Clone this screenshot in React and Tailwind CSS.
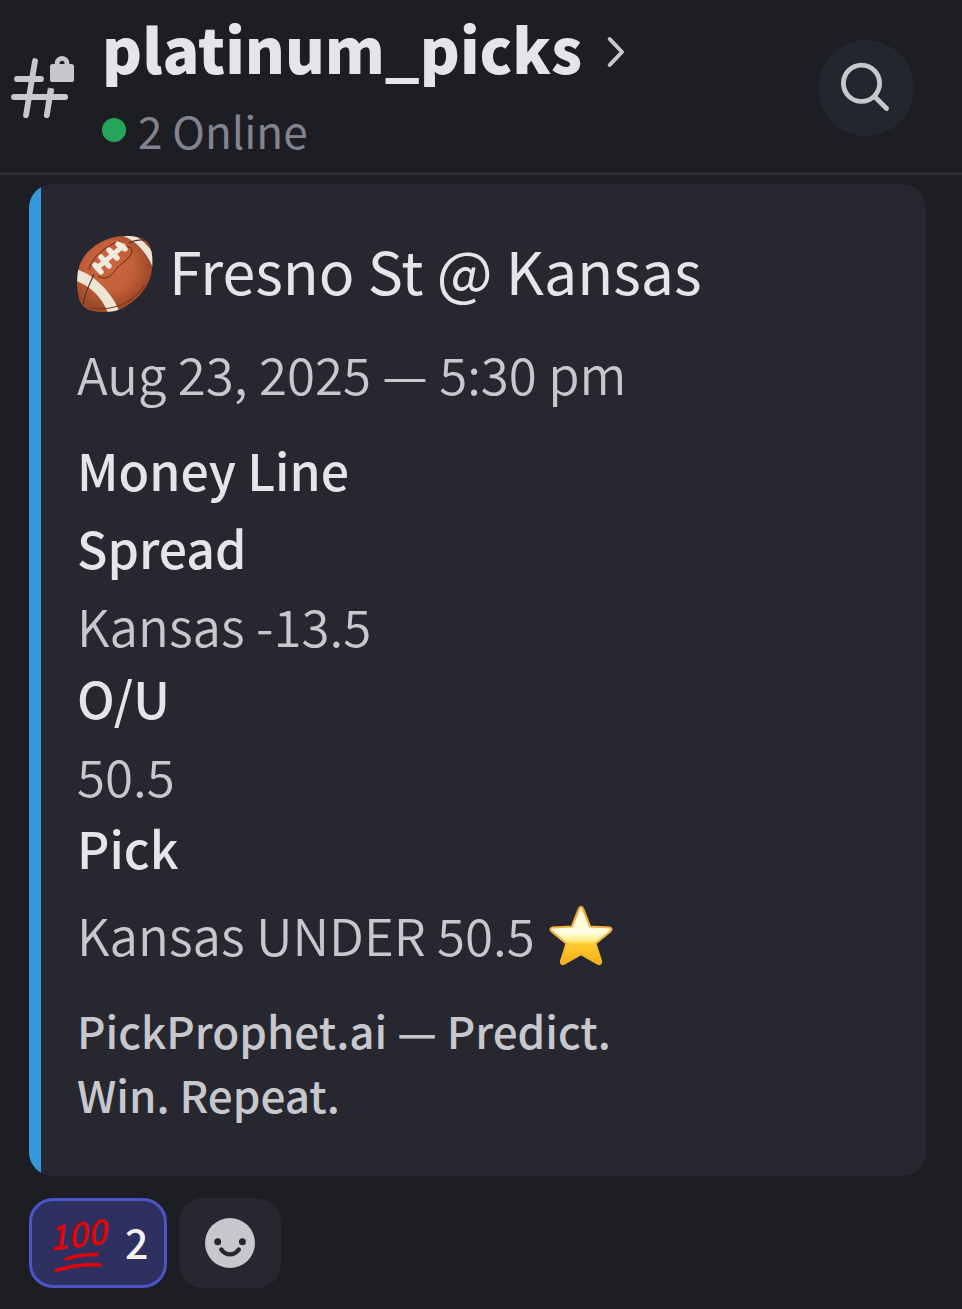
import React, { useState } from "react";

const embed = {
  title: "Fresno St @ Kansas",
  date: "Aug 23, 2025 — 5:30 pm",
  footer: "PickProphet.ai — Predict. Win. Repeat.",
};

const HashLockIcon = () => (
  <svg
    viewBox="8 52 70 70"
    className="w-[70px] h-[70px] shrink-0"
    fill="none"
    stroke="#c7c8ce"
    strokeWidth="5.8"
    strokeLinecap="round"
    aria-hidden="true"
  >
    <path d="M35 61 26 115.200M17 79h24M14 97h51.200M46.800 115.200 50.500 92" />
    <path d="m48.600 88.200 5.200.8-1 6-5-.8Z" fill="#c7c8ce" strokeWidth="0.8" strokeLinejoin="round" />
    <rect x="50" y="64" width="24" height="18" rx="2.600" fill="#c7c8ce" stroke="none" />
    <path d="M57.200 66v-3.500a4.900 4.900 0 0 1 9.700 0V66" strokeWidth="4.800" strokeLinecap="butt" />
  </svg>
);

const ChevronIcon = () => (
  <svg
    viewBox="0 0 20 34"
    className="mt-2 w-5 h-[34px] shrink-0"
    fill="none"
    stroke="#c7c8ce"
    strokeWidth="4"
    strokeLinecap="round"
    strokeLinejoin="round"
    aria-hidden="true"
  >
    <path d="M3.700 4 16 17 3.700 30" />
  </svg>
);

const SearchIcon = () => (
  <svg
    viewBox="818 40 96 96"
    className="w-24 h-24"
    fill="none"
    stroke="#c7c8ce"
    strokeWidth="4.800"
    strokeLinecap="round"
    aria-hidden="true"
  >
    <circle cx="861.500" cy="83.300" r="18.100" />
    <path d="m875 97 11.600 11.500" />
  </svg>
);

const FootballIcon = () => (
  <svg viewBox="0 0 76 76" className="mt-2 w-[76px] h-[76px] shrink-0" role="img" aria-label="Football">
    <defs>
      <radialGradient id="leather" cx="0.42" cy="0.4" r="0.66">
        <stop offset="0" stopColor="#cf6840" />
        <stop offset="0.5" stopColor="#c4603a" />
        <stop offset="0.85" stopColor="#9c4828" />
        <stop offset="1" stopColor="#b5522b" />
      </radialGradient>
      <pattern id="grain" width="4" height="4" patternUnits="userSpaceOnUse">
        <circle cx="1" cy="1" r="0.6" fill="#8f3e20" opacity="0.3" />
        <circle cx="3" cy="3" r="0.6" fill="#8f3e20" opacity="0.3" />
      </pattern>
      <clipPath id="ball">
        <path d="M1 35C4 18 22 1 47 0c11-.5 20 2 24 7 4 5 5 15 4 26-1 17-17 36-37 42-12 2-25 1-31-4C0 65-1 48 1 35Z" />
      </clipPath>
    </defs>
    <g clipPath="url(#ball)">
      <rect width="76" height="76" fill="url(#leather)" />
      <rect width="76" height="76" fill="url(#grain)" />
      <path d="M-1 45C13 50 25 61 31 77h12C37 61 22 41-1 33Z" fill="#ece5d5" />
      <path d="M44-1c12 4 25 15 32 33V17C70 8 63 2 55-2Z" fill="#ece5d5" />
      <path d="M17 38C12 50 7 57 6 70M52 7c8-4 15-4 22-1" fill="none" stroke="#50342c" strokeWidth="1.200" />
      <path d="M12 34C14 22 28 10 43 5M21 40c10 6 15-3 20-9 4-4 13-9 14-16 0-3-2-4-5-4" fill="none" stroke="#5a2c1b" strokeWidth="1" />
      <path d="M8 71c20 5 44 1 60-22" fill="none" stroke="#843719" strokeWidth="1.200" />
    </g>
    <g stroke="#f1ebdf" strokeWidth="5.400" strokeLinecap="round">
      <path d="M20 32 46 10" strokeWidth="5" />
      <path d="m18 29 6 7M24 21l8 9M32 14l8 8M41 8l7 5" />
    </g>
  </svg>
);

const StarIcon = () => (
  <svg viewBox="0 0 64 62" className="mt-1 w-16 h-[62px] shrink-0" role="img" aria-label="Star">
    <defs>
      <linearGradient id="star" x1="0" y1="0" x2="0" y2="1">
        <stop offset="0" stopColor="#fffbd8" />
        <stop offset="0.45" stopColor="#fffce0" />
        <stop offset="0.58" stopColor="#fff08f" />
        <stop offset="0.66" stopColor="#fdcb2d" />
        <stop offset="1" stopColor="#f9b013" />
      </linearGradient>
      <linearGradient id="edge" x1="0" y1="0" x2="0" y2="1">
        <stop offset="0" stopColor="#f0a43c" />
        <stop offset="0.6" stopColor="#f6bc45" />
        <stop offset="1" stopColor="#f3ae27" />
      </linearGradient>
    </defs>
    <path
      d="M30 3.500q2-3.500 4 0L41 21.500 60.500 22.500q3.500 1 .8 3.800L46.500 38.500 52 56q.3 4-3 2.800L32 49 15 58.800q-3.300 1.200-3-2.800L17.500 38.500 2.700 26.300Q0 23.500 3.500 22.500L23 21.500Z"
      fill="url(#star)"
      stroke="url(#edge)"
      strokeWidth="2.200"
      strokeLinejoin="round"
    />
  </svg>
);

const HundredIcon = () => (
  <svg viewBox="0 0 56 60" className="w-14 h-[60px] shrink-0 overflow-visible" role="img" aria-label="100">
    <text
      x="-2"
      y="37"
      transform="rotate(-7 4 38)"
      className="text-[34px] font-medium italic"
      fill="#e30505"
    >
      100
    </text>
    <path
      d="M14 46C24 42.500 34 41.500 45 41.500M4 57.500C18 53 33 51 48 52"
      fill="none"
      stroke="#e30505"
      strokeWidth="3.400"
      strokeLinecap="round"
    />
  </svg>
);

const SmileIcon = () => (
  <svg viewBox="0 0 50 50" className="w-[50px] h-[50px]" aria-hidden="true">
    <circle cx="25" cy="25" r="25" fill="#c7c8ce" />
    <circle cx="12.700" cy="23.800" r="3.500" fill="#27272f" />
    <circle cx="37.400" cy="23.800" r="3.500" fill="#27272f" />
    <path
      d="M16.300 31.500c4.500 6.500 13 6.500 17.500 0"
      fill="none"
      stroke="#27272f"
      strokeWidth="4.400"
      strokeLinecap="round"
    />
  </svg>
);

const ChannelHeader = () => (
  <header className="flex items-start border-b-[3px] border-[#2d2e34] pl-2 pr-12">
    <div className="pt-[52px]">
      <HashLockIcon />
    </div>
    <div className="min-w-0 flex-1 pl-6 pt-2">
      <a href="#channel" className="flex items-center gap-6">
        <h1 className="text-[61px] leading-[80px] font-black text-[#e4e5e9]">platinum_picks</h1>
        <ChevronIcon />
      </a>
      <p className="flex items-center gap-3 text-[44px] leading-[84px] text-[#82838f]">
        <span className="w-6 h-6 rounded-full bg-[#25a55a]" />
        2 Online
      </p>
    </div>
    <button type="button" aria-label="Search" className="mt-10 rounded-full bg-[#24262d]">
      <SearchIcon />
    </button>
  </header>
);

const FieldName = ({ children }) => (
  <dt className="text-[50px] leading-16 font-medium text-[#e4e5e9]">{children}</dt>
);

const FieldValue = ({ children }) => (
  <dd className="mt-[14px] mb-2 flex items-center gap-3 text-[51px] leading-16 font-[350] text-[#c7c8ce]">
    {children}
  </dd>
);

const PickEmbed = () => (
  <article className="rounded-3xl overflow-hidden flex bg-[#27272f]">
    <div className="w-3 shrink-0 bg-[#3498db]" />
    <div className="min-w-0 flex-1 pl-9 pr-12 pt-11 pb-[50px]">
      <h2 className="flex items-center gap-4 text-[59px] leading-[76px] font-normal text-[#e4e5e9]">
        <FootballIcon />
        {embed.title}
      </h2>
      <p className="mt-[29px] text-[51px] leading-16 font-[350] text-[#c7c8ce]">{embed.date}</p>
      <dl className="mt-8">
        <FieldName>Money Line</FieldName>
        <dd className="h-[14px]" />
        <FieldName>Spread</FieldName>
        <FieldValue>Kansas -13.5</FieldValue>
        <FieldName>O/U</FieldName>
        <FieldValue>50.5</FieldValue>
        <FieldName>Pick</FieldName>
        <dd className="mt-[15px] flex items-center gap-[14px] text-[51px] leading-[80px] font-[350] text-[#c7c8ce]">
          Kansas UNDER 50.5
          <StarIcon />
        </dd>
      </dl>
      <p className="mt-6 max-w-[600px] text-[44px] leading-16 font-medium text-[#c7c8ce]">
        {embed.footer}
      </p>
    </div>
  </article>
);

const Reactions = () => {
  const [reacted, setReacted] = useState(true);

  return (
    <div className="mt-[22px] flex gap-3">
      <button
        type="button"
        aria-pressed={reacted}
        onClick={() => setReacted(!reacted)}
        className={`h-[90px] flex items-center gap-[17px] rounded-3xl border-[3px] pl-5 pr-4 text-[#f2f2f5] ${
          reacted ? "border-[#4b54c8] bg-[#2e315f]" : "border-[#27272f] bg-[#27272f]"
        }`}
      >
        <HundredIcon />
        <span className="pb-1 text-[41px] leading-[56px] font-medium">{reacted ? 2 : 1}</span>
      </button>
      <button
        type="button"
        aria-label="Add reaction"
        className="w-[102px] h-[90px] rounded-3xl flex items-center justify-center bg-[#27272f]"
      >
        <SmileIcon />
      </button>
    </div>
  );
};

const App = () => {
  return (
    <div className="min-h-screen bg-[#1d1e23] font-['Noto_Sans_CJK_SC','Noto_Sans',sans-serif]">
      <ChannelHeader />
      <main className="pt-[9px] pl-[29px] pr-9 pb-5">
        <PickEmbed />
        <Reactions />
      </main>
    </div>
  );
};

export default App;
